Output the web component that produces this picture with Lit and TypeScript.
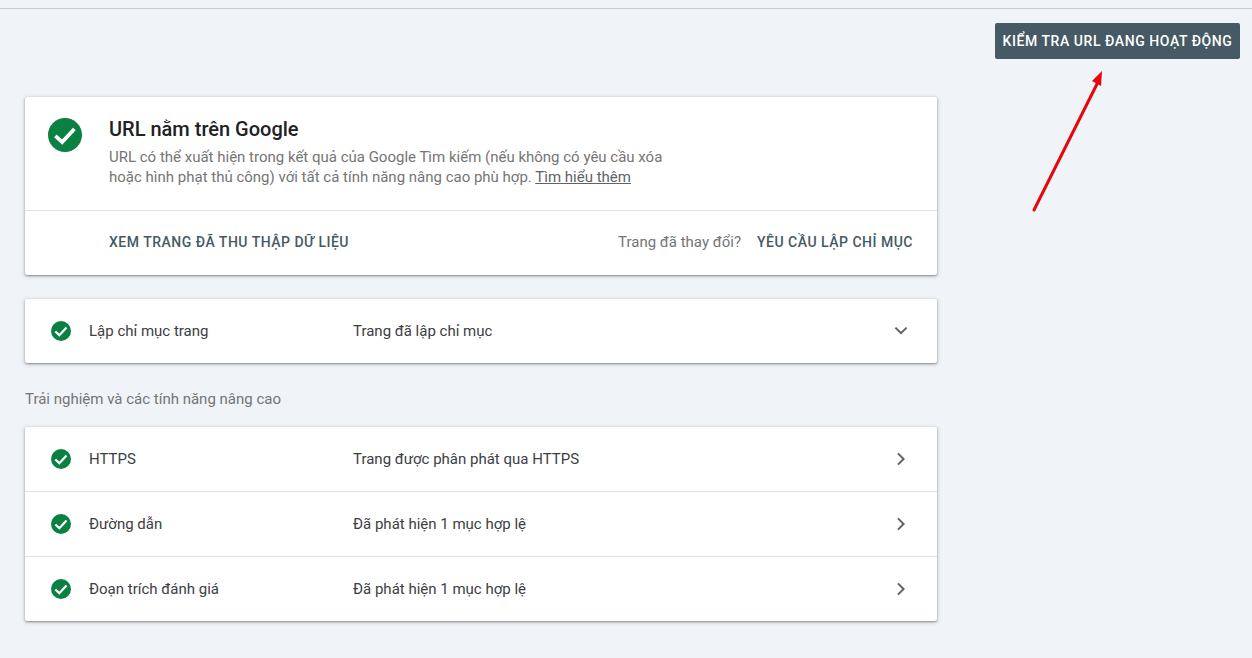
import { LitElement, html, css, svg } from "lit";
import { customElement } from "lit/decorators.js";

const check = (size: number) => html`<svg class="check" width="${size}" height="${size}" viewBox="0 0 24 24">
  <circle cx="12" cy="12" r="12" fill="#0b8043"></circle>
  <path d="M5.2 12.6 L10 17 L18.6 7.8" fill="none" stroke="#fff" stroke-width="2.6"></path>
</svg>`;

const chevDown = html`<svg class="chev" width="24" height="24" viewBox="0 0 24 24"><path d="M6.4 8.6 L12 14.2 L17.6 8.6" fill="none" stroke="#5f6368" stroke-width="2"></path></svg>`;
const chevRight = html`<svg class="chev" width="24" height="24" viewBox="0 0 24 24"><path d="M9 6.4 L14.6 12 L9 17.6" fill="none" stroke="#5f6368" stroke-width="2"></path></svg>`;

const arrow = svg`<path d="M1034 210 L1097 84" stroke="#e8050c" stroke-width="3" stroke-linecap="round" fill="none"></path>
<path d="M1102 71 L1101 86 L1092 81 Z" fill="#e8050c"></path>`;

@customElement("app-root")
export class AppRoot extends LitElement {
  static styles = css`
    :host {
      display: block;
      position: relative;
      width: 1252px;
      height: 658px;
      overflow: hidden;
      background: #f0f3f8;
      font-family: Roboto, "Liberation Sans", sans-serif;
      color: #202124;
      box-sizing: border-box;
      padding-top: 8px;
    }
    .rule { height: 1px; background: #c8ccd0; }
    .bar { display: flex; justify-content: flex-end; padding: 14px 12px 0 0; }
    .btn {
      height: 36px;
      width: 245px;
      box-sizing: border-box;
      display: flex;
      align-items: center;
      justify-content: center;
      background: #455a64;
      color: #fff;
      border-radius: 2px;
      font-size: 14px;
      font-weight: 500;
      letter-spacing: 0.56px;
      white-space: nowrap;
      padding-bottom: 1px;
    }
    main { width: 912px; margin: 38px 0 0 25px; display: flex; flex-direction: column; }
    .card {
      background: #fff;
      border-radius: 2px;
      box-shadow: 0 1px 2px rgba(60,64,67,.5), 0 1px 4px 1px rgba(60,64,67,.15);
    }
    .head { height: 114px; box-sizing: border-box; display: flex; padding: 21px 0 0 23px; border-bottom: 1px solid #e0e0e0; }
    .head .check { flex: none; }
    .head-text { margin-left: 27px; margin-top: -3px; }
    h2 { margin: 0; font-size: 20px; font-weight: 500; line-height: 28px; color: #202124; }
    .desc { margin-top: 4px; font-size: 15px; line-height: 20px; color: #757575; width: 570px; }
    .desc u { color: #5f6368; }
    .foot { height: 64px; box-sizing: border-box; display: flex; align-items: center; padding: 0 24px 2px 84px; }
    .link { font-size: 14px; font-weight: 500; letter-spacing: 0.5px; color: #455a64; white-space: nowrap; }
    .spacer { flex: 1; }
    .changed { font-size: 15px; color: #757575; margin-right: 16px; }
    .row { height: 64px; box-sizing: border-box; display: flex; align-items: center; padding: 0 24px 0 26px; font-size: 15px; color: #3c4043; }
    .row + .row { height: 65px; border-top: 1px solid #e0e0e0; }
    .single { margin-top: 24px; }
    .name { width: 264px; margin-left: 18px; flex: none; }
    .val { flex: 1; }
    .label { margin: 27px 0 19px; font-size: 15px; line-height: 18px; color: #757575; }
    .overlay { position: absolute; left: 0; top: 0; pointer-events: none; }
  `;

  private row(name: string, val: string, chev: unknown) {
    return html`<div class="row">${check(20)}<span class="name">${name}</span><span class="val">${val}</span>${chev}</div>`;
  }

  render() {
    return html`
      <div class="rule"></div>
      <div class="bar"><div class="btn">KIỂM TRA URL ĐANG HOẠT ĐỘNG</div></div>
      <main>
        <section class="card">
          <div class="head">
            ${check(34)}
            <div class="head-text">
              <h2>URL nằm trên Google</h2>
              <div class="desc">URL có thể xuất hiện trong kết quả của Google Tìm kiếm (nếu không có yêu cầu xóa hoặc hình phạt thủ công) với tất cả tính năng nâng cao phù hợp. <u>Tìm hiểu thêm</u></div>
            </div>
          </div>
          <div class="foot">
            <span class="link">XEM TRANG ĐÃ THU THẬP DỮ LIỆU</span>
            <span class="spacer"></span>
            <span class="changed">Trang đã thay đổi?</span>
            <span class="link">YÊU CẦU LẬP CHỈ MỤC</span>
          </div>
        </section>
        <section class="card single">${this.row("Lập chỉ mục trang", "Trang đã lập chỉ mục", chevDown)}</section>
        <div class="label">Trải nghiệm và các tính năng nâng cao</div>
        <section class="card">
          ${this.row("HTTPS", "Trang được phân phát qua HTTPS", chevRight)}
          ${this.row("Đường dẫn", "Đã phát hiện 1 mục hợp lệ", chevRight)}
          ${this.row("Đoạn trích đánh giá", "Đã phát hiện 1 mục hợp lệ", chevRight)}
        </section>
      </main>
      <svg class="overlay" width="1252" height="658" viewBox="0 0 1252 658">${arrow}</svg>
    `;
  }
}
